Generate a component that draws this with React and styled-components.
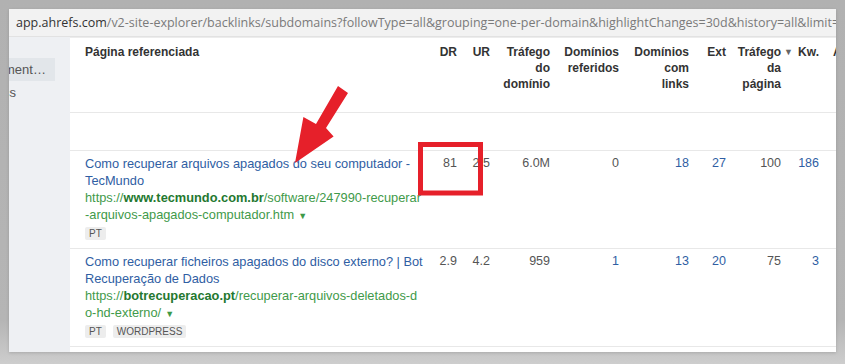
import React from 'react';
import styled, { createGlobalStyle } from 'styled-components';

const GlobalStyle = createGlobalStyle`
  html, body {
    margin: 0;
    padding: 0;
  }
  body {
    width: 845px;
    height: 364px;
    overflow: hidden;
    background: linear-gradient(to bottom, #b1b1b1 0%, #b5b5b5 88%, #cdcdcd 100%);
    font-family: 'Liberation Sans', Arial, sans-serif;
  }
`;

const Page = styled.div`
  position: relative;
  width: 845px;
  height: 364px;
  padding: 9px 9px 0 9px;
  box-sizing: border-box;
`;

const Frame = styled.div`
  width: 827px;
  height: 343px;
  display: flex;
  flex-direction: column;
  background: #fff;
  overflow: hidden;
  box-shadow: 0 1px 3px rgba(0,0,0,0.15);
`;

const AddressBar = styled.div`
  height: 27px;
  flex: none;
  background: #f2f2f2;
  border-bottom: 1px solid #e2e2e2;
  padding-left: 7px;
  display: flex;
  align-items: center;
  white-space: nowrap;
  overflow: hidden;
  font-family: 'Open Sans', sans-serif;
  font-size: 12.5px;
  letter-spacing: 0;
  color: #7a7a7a;

  b {
    font-weight: 400;
    color: #333;
  }
`;

const Body = styled.div`
  flex: 1;
  display: flex;
  min-height: 0;
`;

const Sidebar = styled.div`
  width: 61px;
  flex: none;
  background: #eef0f3;
  padding-top: 21px;
  overflow: hidden;
`;

const SideItem = styled.div`
  width: 46px;
  height: 23px;
  display: flex;
  align-items: center;
  font-size: 13px;
  color: #555;
  white-space: nowrap;
  overflow: hidden;
  background: ${p => (p.$active ? '#e2e6ea' : 'transparent')};

  span {
    margin-left: ${p => p.$shift || 0}px;
  }
`;

const Main = styled.div`
  flex: 1;
  overflow: hidden;
  border-top: 1px solid #ececec;
`;

const cols = '360px 32px 33px 60px 69px 70px 37px 55px 38px 1fr';

const Row = styled.div`
  display: grid;
  grid-template-columns: ${cols};
  height: ${p => p.$h}px;
  box-sizing: border-box;
  border-bottom: 1px solid #e8e8e8;
`;

const HeadCell = styled.div`
  padding: 6px 5px 0 0;
  font-size: 12px;
  font-weight: 700;
  line-height: 16px;
  color: #333;
  text-align: ${p => p.$left ? 'left' : 'right'};
  padding-left: ${p => p.$left ? '15px' : '0'};
  white-space: nowrap;
  overflow: ${p => p.$visible ? 'visible' : 'hidden'};
`;

const SortMark = styled.span`
  font-size: 9px;
  color: #666;
  margin-left: 3px;
  margin-right: -12px;
  vertical-align: 1px;
`;

const PageCell = styled.div`
  padding: 4px 7px 0 15px;
  font-size: 12.8px;
  line-height: 17px;
`;

const Title = styled.a`
  display: block;
  color: #2f5ea3;
  text-decoration: none;
`;

const Url = styled.div`
  color: #3f9a4a;
  word-break: break-all;

  b {
    color: #24782f;
  }
`;

const Caret = styled.span`
  font-size: 9px;
  color: #3d9a48;
  margin-left: 4px;
`;

const Tags = styled.div`
  display: flex;
  gap: 7px;
  margin-top: 2px;
`;

const Tag = styled.span`
  background: #ededed;
  color: #555;
  font-size: 10px;
  line-height: 13px;
  padding: 0 4px;
  border-radius: 2px;
`;

const NumCell = styled.div`
  padding: 4px 5px 0 0;
  font-size: 12.5px;
  line-height: 17px;
  text-align: right;
  color: ${p => (p.$link ? '#2f5ea3' : '#555')};
  white-space: nowrap;
`;

const Overlay = styled.svg`
  position: absolute;
  left: 0;
  top: 0;
  pointer-events: none;
`;

const rows = [
  {
    title: 'Como recuperar arquivos apagados do seu computador - TecMundo',
    pre: 'https://',
    domain: 'www.tecmundo.com.br',
    path: '/software/247990-recuperar-arquivos-apagados-computador.htm',
    tags: ['PT'],
    values: [
      ['81'], ['2.5'], ['6.0M'], ['0'], ['18', true], ['27', true], ['100'], ['186', true],
    ],
  },
  {
    title: 'Como recuperar ficheiros apagados do disco externo? | Bot Recuperação de Dados',
    pre: 'https://',
    domain: 'botrecuperacao.pt',
    path: '/recuperar-arquivos-deletados-do-hd-externo/',
    tags: ['PT', 'WORDPRESS'],
    values: [
      ['2.9'], ['4.2'], ['959'], ['1', true], ['13', true], ['20', true], ['75'], ['3', true],
    ],
  },
];

function App() {
  return (
    <Page>
      <GlobalStyle />
      <Frame>
        <AddressBar>
          <b>app.ahrefs.com</b>/v2-site-explorer/backlinks/subdomains?followType=all&amp;grouping=one-per-domain&amp;highlightChanges=30d&amp;history=all&amp;limit=20&amp;mode=subdomains
        </AddressBar>
        <Body>
          <Sidebar>
            <SideItem $active $shift={-5}><span>ment…</span></SideItem>
            <SideItem $shift={-6}><span>ss</span></SideItem>
          </Sidebar>
          <Main>
            <Row $h={75}>
              <HeadCell $left>Página referenciada</HeadCell>
              <HeadCell>DR</HeadCell>
              <HeadCell>UR</HeadCell>
              <HeadCell>Tráfego<br />do<br />domínio</HeadCell>
              <HeadCell>Domínios<br />referidos</HeadCell>
              <HeadCell>Domínios<br />com<br />links</HeadCell>
              <HeadCell>Ext</HeadCell>
              <HeadCell $visible>Tráfego<SortMark>▼</SortMark><br />da<br />página</HeadCell>
              <HeadCell>Kw.</HeadCell>
              <HeadCell $left style={{ paddingLeft: 9 }}>AR</HeadCell>
            </Row>
            <Row $h={38} />
            {rows.map((r) => (
              <Row $h={98} key={r.domain}>
                <PageCell>
                  <Title href="#">{r.title}</Title>
                  <Url>
                    {r.pre}<b>{r.domain}</b>{r.path}<Caret>▼</Caret>
                  </Url>
                  <Tags>
                    {r.tags.map((t) => <Tag key={t}>{t}</Tag>)}
                  </Tags>
                </PageCell>
                {r.values.map(([v, link], i) => (
                  <NumCell key={i} $link={link}>{v}</NumCell>
                ))}
                <NumCell />
              </Row>
            ))}
          </Main>
        </Body>
      </Frame>
      <Overlay width="845" height="364" viewBox="0 0 845 364">
        <rect x="420.5" y="144.5" width="60" height="48.5" fill="none" stroke="#e6202a" strokeWidth="5" />
        <polygon
          points="338,86 348,93 326,128 333.6,136.6 295,163 303.4,117 316,124"
          fill="#e6202a"
        />
      </Overlay>
    </Page>
  );
}

export default App;
